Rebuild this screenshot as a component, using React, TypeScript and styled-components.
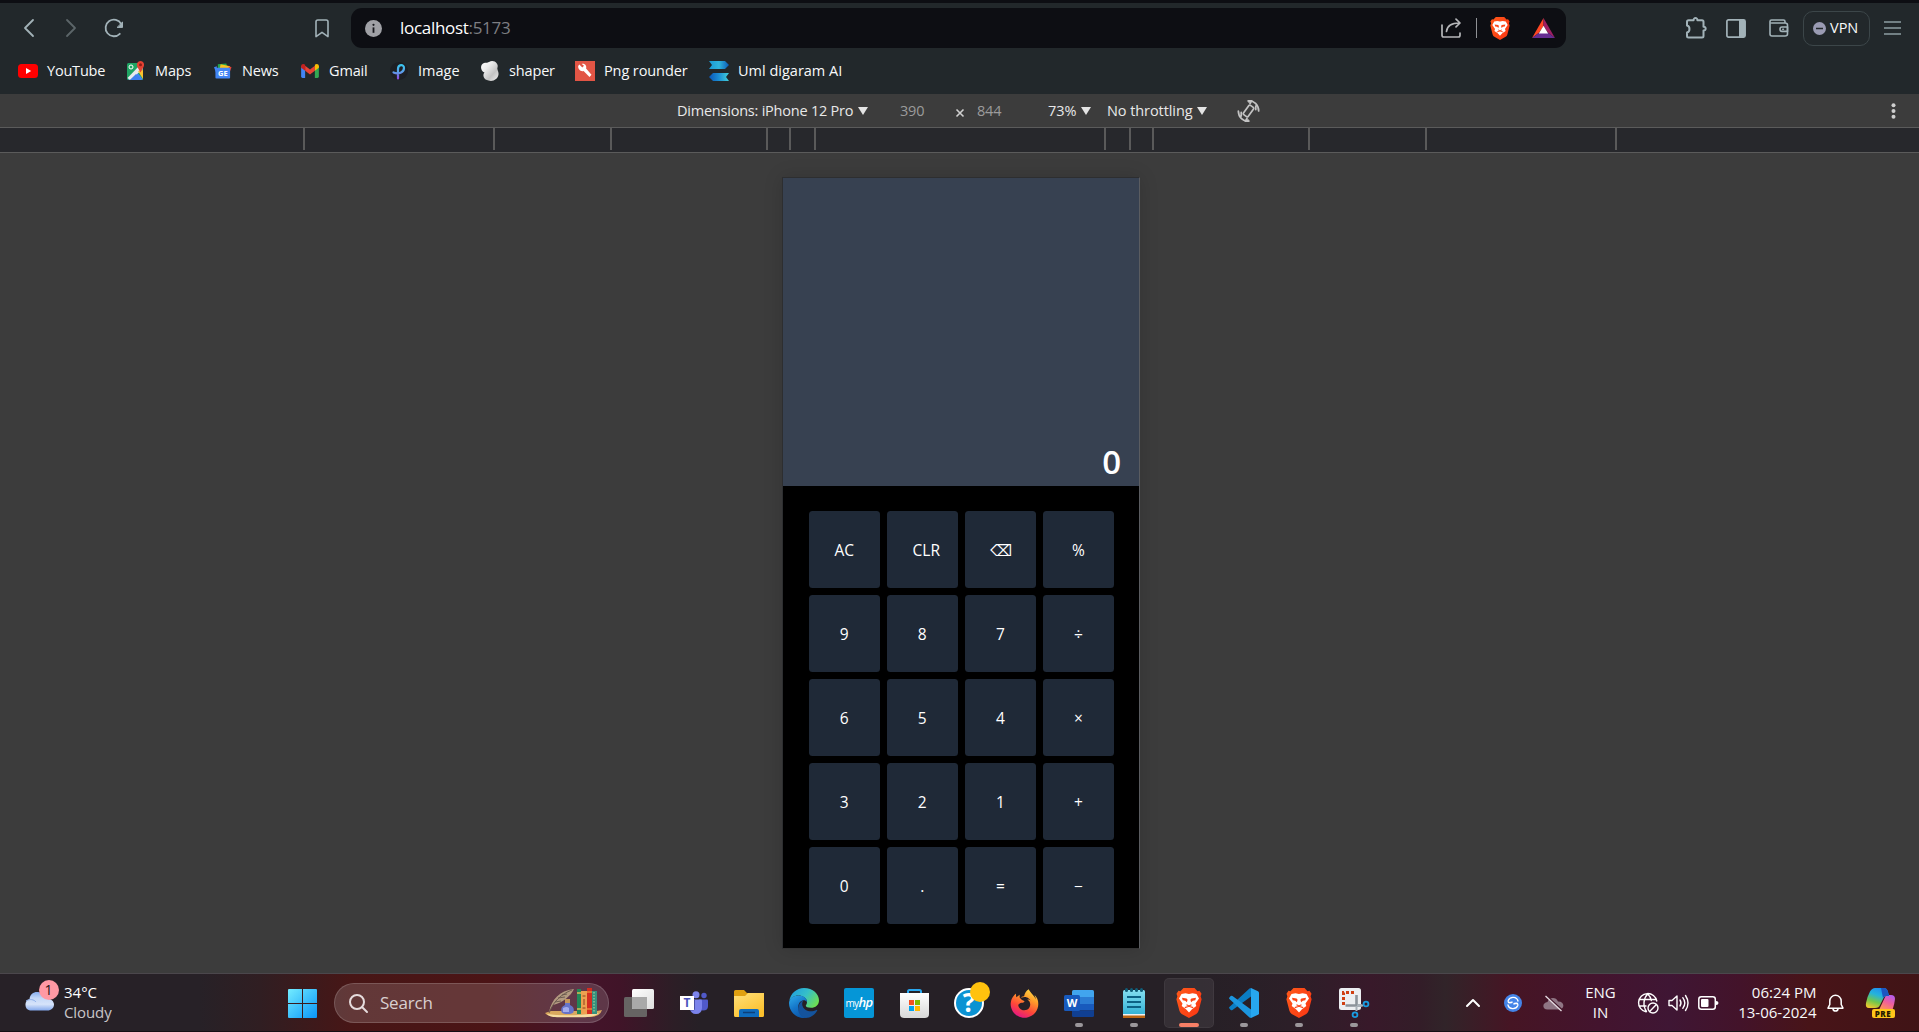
import React from 'react';
import styled, { createGlobalStyle } from 'styled-components';
import { FaFirefoxBrowser } from 'react-icons/fa6';

const GlobalStyle = createGlobalStyle`
  * { box-sizing: border-box; }
  html, body { margin: 0; padding: 0; background: #3c3c3c; overflow: hidden; }
  body { font-family: 'Open Sans', 'Noto Sans', sans-serif; }
  svg { display: block; flex: none; overflow: visible; }
`;

const Screen = styled.div`
  width: 1919px;
  height: 1032px;
  display: flex;
  flex-direction: column;
  background: #3c3c3c;
  overflow: hidden;
`;

const Text = styled.span<{ $size?: number; $ls?: number; $color?: string; $weight?: number }>`
  font-size: ${p => p.$size ?? 14.5}px;
  letter-spacing: ${p => p.$ls ?? 0}px;
  color: ${p => p.$color ?? '#f8f9fa'};
  font-weight: ${p => p.$weight ?? 400};
  line-height: 20px;
  white-space: nowrap;
`;

/* ---------- browser chrome ---------- */

const BrowserTop = styled.header`
  height: 94px;
  border-top: 3px solid #0d0e13;
  background: #22282b;
  flex: none;
`;

const NavBar = styled.div`
  height: 50px;
  display: flex;
  align-items: center;
`;

const Slot = styled.div<{ $w: number; $justify?: string }>`
  width: ${p => p.$w}px;
  flex: none;
  display: flex;
  align-items: center;
  justify-content: ${p => p.$justify ?? 'center'};
`;

const AddressBar = styled.div`
  width: 1215px;
  height: 40px;
  border-radius: 11px;
  background: #0d0e13;
  display: flex;
  align-items: center;
  padding-left: 14px;
  flex: none;
`;

const Url = styled.div`
  margin-left: 18px;
  width: 1041px;
  display: flex;
`;

const Divider = styled.div`
  width: 1px;
  height: 20px;
  margin: 0 13px 0 14px;
  background: #8f9195;
`;

const VpnButton = styled.button`
  width: 67px;
  height: 35px;
  border: 1px solid #3c4649;
  border-radius: 10px;
  background: transparent;
  display: flex;
  align-items: center;
  gap: 4px;
  padding: 0 0 0 9px;
  font-family: inherit;
`;

const Bookmarks = styled.nav`
  height: 38px;
  padding: 0 0 3px 18px;
  display: flex;
  align-items: center;
`;

const Bookmark = styled.a<{ $w: number }>`
  width: ${p => p.$w}px;
  flex: none;
  display: flex;
  align-items: center;
  gap: 9px;
`;

const IconBox = styled.span`
  width: 20px;
  height: 20px;
  display: flex;
  align-items: center;
  justify-content: center;
  flex: none;
`;

/* ---------- device toolbar ---------- */

const DeviceBar = styled.div`
  height: 33px;
  background: #3c3c3c;
  display: flex;
  align-items: center;
  padding: 0 20px 0 677px;
  flex: none;
`;

const Field = styled.div<{ $w: number; $drop?: number }>`
  width: ${p => p.$w}px;
  height: 20px;
  display: flex;
  align-items: center;
  padding-top: ${p => p.$drop ?? 0}px;
  flex: none;
`;

const Ruler = styled.div`
  height: 26px;
  flex: none;
  display: flex;
  justify-content: center;
  background: #27282c;
  border-top: 1px solid #5b5b5b;
  border-bottom: 1px solid #5b5b5b;
`;

const Tick = styled.i<{ $gap: number }>`
  width: 2px;
  height: 22px;
  margin-left: ${p => p.$gap}px;
  background: #5a5a5a;
  flex: none;
`;

const Stage = styled.main`
  height: 820px;
  flex: none;
  padding: 24px 0 0 782px;
`;

/* ---------- calculator ---------- */

const Phone = styled.section`
  width: 358px;
  height: 772px;
  border: 1px solid #2d2e30;
  border-right-color: #5a5c60;
  border-bottom-color: #343434;
  box-shadow: 0 0 18px rgba(0, 0, 0, 0.14);
  background: #000;
  display: flex;
  flex-direction: column;
`;

const Display = styled.div`
  height: 308px;
  background: #374151;
  display: flex;
  justify-content: flex-end;
  align-items: flex-end;
  padding: 0 18px 6px 0;
  flex: none;
`;

const Result = styled.output`
  color: #fff;
  font-size: 33px;
  font-weight: 600;
  line-height: 36px;
`;

const Keypad = styled.div`
  display: grid;
  grid-template-columns: repeat(4, 71px);
  grid-auto-rows: 76.7px;
  column-gap: 7.1px;
  row-gap: 7.3px;
  padding: 24.9px 0 0 25.7px;
`;

const Key = styled.button<{ $dx?: number }>`
  border: 0;
  border-radius: 3.5px;
  background: #1f2937;
  color: #fff;
  font-family: 'Open Sans', 'DejaVu Sans', sans-serif;
  font-size: 15.5px;
  line-height: 20px;
  padding: 1.4px 0 0 ${p => p.$dx ?? 0}px;
  display: flex;
  align-items: center;
  justify-content: center;
`;

/* ---------- taskbar ---------- */

const Taskbar = styled.footer`
  height: 59px;
  flex: none;
  display: flex;
  align-items: center;
  padding: 1px 0 0 24px;
  border-top: 1px solid #4b474c;
  border-bottom: 1px solid #150f14;
  background: linear-gradient(
    90deg,
    #272127 0, #272127 200px, #301e22 260px, #471616 350px, #4b1416 490px,
    #45142a 580px, #401428 620px, #2c1e26 675px, #262026 700px, #262026 1200px,
    #2c1f28 1290px, #38192a 1370px, #331d28 1420px, #312429 1445px, #461524 1510px,
    #43142e 1600px, #3f1634 1670px, #43132a 1740px, #481418 1810px, #401416 1919px
  );
`;

const Weather = styled.div`
  width: 264px;
  display: flex;
  align-items: center;
  gap: 10px;
`;

const CloudWrap = styled.div`
  position: relative;
  width: 30px;
  height: 24px;
  flex: none;
`;

const Badge = styled.span`
  position: absolute;
  left: 14.5px;
  top: -11px;
  width: 20px;
  height: 20px;
  border-radius: 50%;
  background: #ff99a4;
  color: #1d1416;
  font-size: 14px;
  line-height: 20px;
  text-align: center;
`;

const Lines = styled.div<{ $align?: string }>`
  display: flex;
  flex-direction: column;
  align-items: ${p => p.$align ?? 'flex-start'};
  padding-bottom: 2px;
  flex: none;
`;

const SearchBox = styled.div`
  width: 275px;
  height: 40px;
  margin: 0 2.5px 0 17px;
  border-radius: 20px;
  border: 1px solid rgba(255, 255, 255, 0.16);
  background: rgba(255, 255, 255, 0.15);
  display: flex;
  align-items: center;
  padding: 0 0 0 14px;
  flex: none;
`;

const SearchText = styled.div`
  width: 177px;
  padding: 0 0 0 12px;
`;

const AppTile = styled.div<{ $active?: boolean }>`
  position: relative;
  width: 50px;
  height: 50px;
  margin: 0 2.5px;
  border-radius: 5px;
  display: flex;
  align-items: center;
  justify-content: center;
  flex: none;
  background: ${p => (p.$active ? 'rgba(255,255,255,0.07)' : 'transparent')};
  box-shadow: ${p => (p.$active ? 'inset 0 0 0 1px rgba(255,255,255,0.05)' : 'none')};
`;

const Running = styled.i<{ $active?: boolean }>`
  position: absolute;
  bottom: 1px;
  left: ${p => (p.$active ? 15 : 21)}px;
  width: ${p => (p.$active ? 20 : 8)}px;
  height: 4px;
  border-radius: 2px;
  background: ${p => (p.$active ? '#f77f66' : '#9b979b')};
`;

const MyHp = styled.div`
  width: 30px;
  height: 30px;
  border-radius: 2px;
  background: #0596d7;
  color: #fff;
  font: 10px/28px 'Open Sans', sans-serif;
  text-align: center;
  letter-spacing: -0.6px;
  b { font-size: 13px; font-weight: 600; font-style: italic; }
`;

const FoxIcon = styled(FaFirefoxBrowser)`
  path { fill: url(#foxFill); }
`;

/* ---------- icons ---------- */

const line = { fill: 'none', strokeLinecap: 'round' as const, strokeLinejoin: 'round' as const };

const Chevron = ({ color, flip }: { color: string; flip?: boolean }) => (
  <svg width="10" height="18" viewBox="0 0 10 18" {...line} stroke={color} strokeWidth="1.8">
    <path d={flip ? 'M1 1l8 8-8 8' : 'M9 1L1 9l8 8'} />
  </svg>
);

const Reload = () => (
  <svg width="20" height="20" viewBox="0 0 20 20" {...line} stroke="#a2b2b8" strokeWidth="1.8">
    <path d="M15.8 15.8A8.3 8.3 0 1 1 17.2 6" />
    <path d="M18.5 4.4v5h-5z" fill="#a2b2b8" strokeWidth="1" />
  </svg>
);

const BookmarkOutline = () => (
  <svg width="14" height="19" viewBox="0 0 14 19" {...line} stroke="#a2b2b8" strokeWidth="1.6">
    <path d="M1 2.8Q1 1 2.8 1h8.4Q13 1 13 2.8V17.6L7 13.4 1 17.6z" />
  </svg>
);

const Info = () => (
  <svg width="17" height="17" viewBox="0 0 17 17">
    <circle cx="8.5" cy="8.5" r="8.5" fill="#a0a1a6" />
    <circle cx="8.5" cy="4.8" r="1.1" fill="#17181d" />
    <path d="M8.5 7.4v5.4" stroke="#17181d" strokeWidth="1.8" />
  </svg>
);

const Share = () => (
  <svg width="21" height="20" viewBox="0 0 21 20" {...line} stroke="#b6b7ba" strokeWidth="1.7">
    <path d="M1 7v10.3Q1 19 2.7 19h14.6q1.7 0 1.7-1.7V15" />
    <path d="M5.500 13.500C6 8.500 9.500 5 18.500 5M15 1.200l4 3.800-4 3.800" />
  </svg>
);

const BraveIcon = ({ w, h }: { w: number; h: number }) => (
  <svg width={w} height={h} viewBox="0 0 26 30">
    <path d="M7.500 0h11l3 3.200 2-.4 2 3-.9 2.400 1 3-3 11.500q-.6 2-2.300 3.200L13 30l-7.300-4.100q-1.700-1.200-2.300-3.200L.4 11.200l1-3L.5 5.800l2-3 2 .4z" fill="url(#braveFill)" />
    <path d="M5.500 6l4-.8L13 6l3.500-.8 4 .8 2.500 4.500-3.500 5 .8 2.600-4.300 3.200L13 24.500l-3-3.200-4.300-3.200.8-2.600L3 10.500z" fill="#fff" />
    <path d="M6 9.700l4.600.8 1 1.300-.7 2.500-1.700-1.600-2.500-.4zM20 9.700l-4.600.8-1 1.300.7 2.500 1.700-1.600 2.500-.4z" fill="#fb4518" />
    <path d="M10.500 16.800l2.500 1.200 2.500-1.200M8.800 19.600L13 18.300l4.200 1.300" fill="none" stroke="#fb4518" strokeWidth="1.100" />
  </svg>
);

const Bat = () => (
  <svg width="23" height="20" viewBox="0 0 23 20">
    <path d="M11.500 0v8L7 14.800 0 20z" fill="#ff4724" />
    <path d="M11.500 0L23 20l-7-5.200L11.500 8z" fill="#9e1f63" />
    <path d="M0 20h23l-7-5.200H7z" fill="#662d91" />
    <path d="M11.500 7.800l4.700 7.600H6.800z" fill="#fff" />
  </svg>
);

const Puzzle = () => (
  <svg width="21" height="22" viewBox="0 0 21 22" {...line} stroke="#a2b2b8" strokeWidth="2">
    <path d="M2.500 3.200H7.600C7.400.4 11.600.4 11.400 3.200H16Q17.500 3.200 17.500 4.700V9.800C20.400 9.600 20.400 13.700 17.500 13.500V19Q17.500 20.500 16 20.500H2.500Q1 20.500 1 19V15.500C4.300 14.800 4.300 9.200 1 8.500V4.700Q1 3.200 2.500 3.200z" />
  </svg>
);

const SidePanel = () => (
  <svg width="20" height="19" viewBox="0 0 20 19">
    <rect x=".9" y=".9" width="18.200" height="17.200" rx="1.500" fill="none" stroke="#a2b2b8" strokeWidth="1.700" />
    <path d="M13 1h6v17h-6z" fill="#a2b2b8" />
  </svg>
);

const Wallet = () => (
  <svg width="20" height="18" viewBox="0 0 20 18" {...line} stroke="#a2b2b8" strokeWidth="1.600">
    <path d="M16 3.500V2.500Q16 1 14.500 1H2.500Q1 1 1 2.500V15q0 2 2 2h13q2.500 0 2.500-2V6q0-2-2.500-2H2.500" />
    <path d="M18.500 8h-5.500q-2 0-2 2.200t2 2.200h5.500zM13.800 10.200h.6" />
  </svg>
);

const Rotate = () => (
  <svg width="23" height="24" viewBox="0 0 24 24" {...line} stroke="#c3c3c3" strokeWidth="1.800">
    <rect x="9" y="6" width="6" height="12" rx="1.200" transform="rotate(36 12 12)" />
    <path d="M12 1.500C17.500 1 22.600 5.500 22.600 12M19.600 6.800V10.500M12 22.500C6.500 23 1.400 18.500 1.400 12M4.400 17.200V13.500" />
    <path d="M11.500 1.300l4.300-.3-1.800 3.600zM12.500 22.700l-4.300.3 1.800-3.600z" fill="#c3c3c3" strokeWidth="1" />
  </svg>
);

const Caret = () => (
  <svg width="10" height="8" viewBox="0 0 10 8"><path d="M0 0h10L5 8z" fill="#e4e4e4" /></svg>
);

const YouTubeIcon = () => (
  <svg width="20" height="14" viewBox="0 0 20 14">
    <rect width="20" height="14" rx="3.500" fill="#f00" /><path d="M8 4l5.200 3L8 10z" fill="#fff" />
  </svg>
);

const MapsIcon = () => (
  <svg width="20" height="20" viewBox="0 0 20 20">
    <rect x="1" y="2" width="16" height="17" rx="1.500" fill="#1fa463" />
    <path d="M2 18.500L10 10l7 8.500z" fill="#4285f4" />
    <path d="M1.500 17L14 4l3 4-13 11z" fill="#e9eaec" />
    <path d="M4 19l6-6 6 6z" fill="#3f80ee" />
    <path d="M12 10l5 8V9z" fill="#fbc02d" />
    <circle cx="5" cy="6" r="2" fill="none" stroke="#fff" />
    <path d="M14.500 0C11 0 9.800 4 12 7l2.500 4.500L17 7c2.200-3 1-7-2.500-7z" fill="#e34133" />
    <circle cx="14.500" cy="3.700" r="1.500" fill="#8c1d18" />
  </svg>
);

const NewsWrap = styled.span`
  position: relative;
`;
const NewsMark = styled.span`
  position: absolute;
  left: 4px;
  top: 7px;
  font-size: 7.5px;
  font-weight: 700;
  line-height: 9px;
  color: #fff;
`;

const NewsIcon = () => (
  <NewsWrap>
    <svg width="18" height="17" viewBox="0 0 19 17">
      <path d="M4 2l9-1 2 8H4z" fill="#27a34e" />
      <path d="M7 2l10 2-1 7H5z" fill="#f8c21c" />
      <path d="M0 5l3-1v9z" fill="#4285f4" /><path d="M18.500 5l-3-1v9z" fill="#ea4335" />
      <rect x="1.500" y="5.500" width="15.500" height="11.500" rx="1" fill="#4285f4" />
    </svg>
    <NewsMark>GE</NewsMark>
  </NewsWrap>
);

const GmailIcon = () => (
  <svg width="18" height="14" viewBox="0 0 19 15">
    <path d="M0 2v11.500Q0 15 1.500 15H4.300V4z" fill="#4285f4" />
    <path d="M19 2v11.500Q19 15 17.500 15h-2.800V4z" fill="#34a853" />
    <path d="M4.300 2l5.200 4 5.200-4v5.200l-5.200 4-5.200-4z" fill="#ea4335" />
    <path d="M0 2.300C0 .2 2.400-.7 4.300.9V7.200L0 4z" fill="#c5221f" />
    <path d="M19 2.300C19 .2 16.600-.7 14.700.9V7.200L19 4z" fill="#fbbc04" />
  </svg>
);

const ImageIcon = () => (
  <svg width="18" height="18" viewBox="0 0 18 18" {...line} strokeWidth="2.200">
    <circle cx="9" cy="9" r="9" fill="#1d1f24" />
    <path d="M3.500 10.500c5 2 10.500 0 10.500-4.500C14 2 8 2 8 7v9.500" stroke="url(#pixFill)" />
  </svg>
);

const ShaperIcon = () => (
  <svg width="18" height="20" viewBox="0 0 18 20">
    <path d="M8 1c5-3 10 2 8.500 5.500-.8 2 1.500 4 1 7C17 18 12 21 7.500 19.500 3 19 1 14 3.500 11.500-1 10-1 3 3 2c2-.8 3 .2 5-1z" fill="url(#shaperFill)" />
  </svg>
);

const WrenchIcon = () => (
  <svg width="20" height="20" viewBox="0 0 20 20">
    <rect width="20" height="20" fill="#e25545" />
    <path d="M4.300 3.500l3 3 1.700-1.700-2.300-1.900c3-.8 5.300 1.700 4.400 4.600l5.400 6.300-2 2.200-5.900-6C5.700 11 2.800 8 3.200 5z" fill="#fff" />
  </svg>
);

const UmlIcon = () => (
  <svg width="20" height="20" viewBox="0 0 20 20">
    <path d="M0 0h16l4 4-4 4H0l3-4z" fill="url(#umlA)" />
    <path d="M20 12H4l-4 4 4 4h16l-3-4z" fill="url(#umlB)" />
  </svg>
);

const Cloud = () => (
  <svg width="30" height="20" viewBox="0 0 30 20">
    <path d="M6 19.500a6 6 0 0 1-.5-11.500C6 3 10 .5 14 1c4 .3 7 3 8 6.500 4.500-.2 8 2.500 8 6s-3 6-6.500 6z" fill="url(#cloudFill)" />
    <path d="M2 10c4-2.500 8-1.500 10 1" fill="none" stroke="#8fb0ea" strokeWidth="1" />
  </svg>
);

const Windows = () => (
  <svg width="29" height="29" viewBox="0 0 29 29">
    <path d="M1 0h13v14H0V1Q0 0 1 0zM15 0h13q1 0 1 1v13H15zM0 15h14v14H1q-1 0-1-1zM15 15h14v13q0 1-1 1H15z" fill="url(#winFill)" />
  </svg>
);

const Magnifier = () => (
  <svg width="19" height="19" viewBox="0 0 19 19" {...line} stroke="#e6dcdd" strokeWidth="2">
    <circle cx="8" cy="8" r="7" /><path d="M13 13l5 5" />
  </svg>
);

const SearchArt = () => (
  <svg width="57" height="30" viewBox="0 0 57 30">
    <path d="M0 25l6-2h46l5-1q-2 7-12 7H12Q3 29 0 25z" fill="#d9a85e" />
    <path d="M2 26q20 3 52-1-4 4-14 4.200H12Q4 29 2 26z" fill="#f6dca0" />
    <path d="M4 24C7 11 14 3 29 1 26 8 17 15 8 17z" fill="#b39a80" />
    <path d="M4 25C8 14 16 6 27 2M10 14l6-1M13 10l7-1M17 7l5-1" fill="none" stroke="#67564c" strokeWidth=".9" />
    <path d="M20 11h5v5h-5z" fill="#c5955a" />
    <path d="M20 15h5v2q5 2 3.500 7-1 2-6 2t-6-2Q15 19 20 17z" fill="#6673c9" />
    <path d="M18 20q4-2 6 0v4h-6z" fill="#a3abed" />
    <path d="M32 1h4v25h-4z" fill="#238657" />
    <path d="M32 5h4M32 21h4" stroke="#ddba55" strokeWidth="1.500" />
    <path d="M36 3h6v23h-6z" fill="#eda050" /><path d="M37.500 8h3M37.500 20h3M39 11v6" stroke="#8d431d" />
    <path d="M42 0h5v26h-5z" fill="#d42d20" /><path d="M42 4h5M42 21h5" stroke="#f4b13f" />
    <path d="M47 3h5v23h-5z" fill="#36907e" /><path d="M49 4v21" stroke="#badf9d" strokeDasharray="1.500 1.500" />
  </svg>
);

const TaskView = () => (
  <svg width="30" height="28" viewBox="0 0 30 28">
    <rect y="8" width="23" height="20" rx="1.500" fill="#666463" />
    <rect x="8" width="22" height="20" rx="1.500" fill="url(#tvFill)" />
    <path d="M8 8h15v12H9.500Q8 20 8 18.500z" fill="#a9a9a9" />
  </svg>
);

const TeamsT = styled.span`
  position: absolute;
  left: 11px;
  top: 18px;
  width: 14px;
  height: 14px;
  background: #fff;
  color: #4b53bc;
  font: 700 12px/14px 'Open Sans', sans-serif;
  text-align: center;
`;

const Teams = () => (
  <>
    <svg width="27" height="24" viewBox="0 0 27 24">
      <circle cx="15" cy="3.700" r="3.500" fill="#7b83eb" /><circle cx="23" cy="4.500" r="2.700" fill="#5059c9" />
      <path d="M18 8.500h8q1 0 1 1V15q0 4.500-5 4.500-4 0-4-4z" fill="#5059c9" />
      <path d="M10 8.500h10q1 0 1 1V17q-.5 6-6 6t-6-6z" fill="#7b83eb" />
      <path d="M14 8.500v9q0 2-2 2H9V17l1-8.500z" fill="#4a4fa5" />
    </svg>
    <TeamsT>T</TeamsT>
  </>
);

const Folder = () => (
  <svg width="30" height="27" viewBox="0 0 30 27">
    <path d="M0 10V1.500Q0 0 1.500 0h8.500l3 3h15.500Q30 3 30 4.500V10z" fill="#e0a010" />
    <path d="M0 6h11l3-3h16v22.500Q30 27 28.500 27h-27Q0 27 0 25.500z" fill="url(#folderFill)" />
    <path d="M5 27v-6q0-2 2-2h16q2 0 2 2v6z" fill="#0f6cbd" /><path d="M9 22.500h12" stroke="#0c3f78" strokeWidth="1.500" />
  </svg>
);

const EdgeIcon = () => (
  <svg width="30" height="30" viewBox="0 0 30 30">
    <path d="M.3 13C1.500 5.500 7.500 0 15 0c9 0 15 6.200 15 12.200 0 4.800-3.500 7.600-8 7.600-3.300 0-5.200-1-5.200-2 0-.8 1.200-1.300 1.200-3.800C18 10 13.500 7.500 9.500 7.500 5 7.500 1.500 10 .3 13z" fill="url(#edgeTop)" />
    <path d="M0 15C0 10.500 4.500 7.500 9.500 7.500c5.500 0 8.500 3.300 8.500 6.500-1-1.700-2.600-2-3.600-1.800-3 .3-5.700 3.800-5 8.300C10 25 13 28.700 17 29.900 8 31 0 24.500 0 15z" fill="url(#edgeLeft)" />
    <path d="M28.300 22.300C26 27 21.500 30 16.800 30 12 29 8.800 25 9.200 20.200c.3-3.900 2.300-6.900 5.200-8-1.700 2.300-1.800 5.800.9 8.500 3.200 3.200 8.200 3.300 12.200 1.200.6-.3 1 0 .8.400z" fill="#14539c" />
  </svg>
);

const Store = () => (
  <svg width="29" height="29" viewBox="0 0 29 29">
    <path d="M8 6V2.500Q8 1 9.500 1h10Q21 1 21 2.500V6" fill="none" stroke="#2aa7ee" strokeWidth="2" />
    <path d="M0 4h29v21q0 4-4 4H4q-4 0-4-4z" fill="url(#storeFill)" />
    <path d="M9 11h5v5H9z" fill="#f25022" /><path d="M15 11h5v5h-5z" fill="#7fba00" />
    <path d="M9 17h5v5H9z" fill="#00a4ef" /><path d="M15 17h5v5h-5z" fill="#ffb900" />
  </svg>
);

const HelpMark = styled.span`
  position: relative;
  width: 30px;
  height: 30px;
  border: 2px solid #fff;
  border-radius: 50%;
  background: #0b93d3;
  color: #fff;
  font: 700 26px/25px 'Open Sans', sans-serif;
  text-align: center;
  &::after {
    content: '';
    position: absolute;
    right: -8px;
    top: -8px;
    width: 20px;
    height: 20px;
    border-radius: 50%;
    background: #ffc20e;
  }
`;

const WordW = styled.span`
  position: absolute;
  left: 10px;
  top: 17px;
  width: 16px;
  height: 16px;
  border-radius: 1.500px;
  background: #185abd;
  color: #fff;
  font: 700 11px/15px 'Open Sans', sans-serif;
  text-align: center;
`;

const Word = () => (
  <>
    <svg width="29" height="27" viewBox="0 0 29 27">
      <path d="M7 7V1.500Q7 0 8.500 0h19Q29 0 29 1.500V7z" fill="#41a5ee" />
      <path d="M7 7h22v7H7z" fill="#2b7cd3" /><path d="M7 14h22v6.500H7z" fill="#185abd" />
      <path d="M7 20.500h22v5Q29 27 27.500 27h-19Q7 27 7 25.500z" fill="#103f91" />
    </svg>
    <WordW>W</WordW>
  </>
);

const Notepad = () => (
  <svg width="22" height="30" viewBox="0 0 22 30">
    <path d="M0 26h22v4H0z" fill="#bb6513" /><path d="M0 25h22v2.500H0z" fill="#f1f1f1" />
    <path d="M0 3.500Q0 2 1.500 2h19Q22 2 22 3.500V26H0z" fill="url(#noteFill)" />
    <path d="M4 9h14M4 14h14M4 19h14" stroke="#0c6285" strokeWidth="1.800" />
    {[3.5, 8.5, 13.5, 18.5].map(x => <path key={x} d={`M${x} 1.500v1`} stroke="#0f5d78" strokeWidth="3" strokeLinecap="round" />)}
  </svg>
);

const VsCode = () => (
  <svg width="30" height="30" viewBox="0 0 30 30">
    <path d="M22 0l7 3.200q1 .5 1 1.500v20.600q0 1-1 1.500L22 30z" fill="#27a7f0" />
    <path d="M22 0v8.500L3.500 22q-1 .7-1.800 0L.4 20.600q-.8-.8 0-1.700L20.500.5z" fill="#0b7dc4" />
    <path d="M22 30v-8.500L3.500 8q-1-.7-1.800 0L.4 9.400q-.8.800 0 1.700l20.100 18.400z" fill="#1c96df" />
  </svg>
);

const Snip = () => (
  <svg width="30" height="30" viewBox="0 0 30 30" fill="none">
    <rect width="22" height="22" rx="2.500" fill="#eceef1" />
    <path d="M4.500 17V4.500H17" stroke="#d03f12" strokeWidth="3" strokeDasharray="3 2" />
    <path d="M17.500 7v11.500M6.500 17.500H23" stroke="#8c939a" strokeWidth="2.600" />
    <path d="M17.500 18v5M18 17.500h6" stroke="#a9b2b9" strokeWidth="2" />
    <circle cx="16" cy="26.700" r="2.400" stroke="#199be2" strokeWidth="1.800" /><circle cx="27" cy="16" r="2.400" stroke="#199be2" strokeWidth="1.800" />
  </svg>
);

const Up = () => (
  <svg width="14" height="8" viewBox="0 0 14 8" {...line} stroke="#fff" strokeWidth="2"><path d="M1 7l6-6 6 6" /></svg>
);

const Sync = () => (
  <svg width="18" height="18" viewBox="0 0 18 18" {...line} stroke="#fff" strokeWidth="1.300">
    <circle cx="9" cy="9" r="9" fill="#4484e8" stroke="none" />
    <path d="M14 7C13 2.500 6 2 4.200 6.500 3.600 9.500 7 9 8 8M4 11c1 4.500 8 5 9.800.5.600-3-2.800-2.500-3.800-1.500M4.500 8.500H8M10 9.500h3.500" />
  </svg>
);

const CloudOff = () => (
  <svg width="21" height="17" viewBox="0 0 21 17">
    <path d="M4.500 14.500C-1 14.500-1 7.500 4.500 7 5.500 2.500 13 1 15 6.500c7-.2 7 8 1 8z" fill="#8f7584" />
    <path d="M3.500 .8l15.500 14" stroke="#43152a" strokeWidth="1.600" />
    <path d="M2.500 1l16 15" stroke="#e6dce2" strokeWidth="1.300" />
  </svg>
);

const Globe = () => (
  <svg width="21" height="21" viewBox="0 0 21 21" {...line} stroke="#fff" strokeWidth="1.400">
    <path d="M8 18.800A9.200 9.200 0 1 1 18.800 8M1.500 6.500h16.300M1 13h7M8.500 18.500C4.500 13 5.500 5 9.700.9c2 1.800 3.300 4.200 3.600 6.600" />
    <circle cx="15" cy="15" r="5" /><path d="M11.600 18.400l6.800-6.800" />
  </svg>
);

const Speaker = () => (
  <svg width="21" height="18" viewBox="0 0 21 18" {...line} stroke="#fff" strokeWidth="1.400">
    <path d="M1 6.500h3L9 2v14l-5-4.500H1zM12 6q2 3 0 6M14.800 3.700q4 5.300 0 10.600M17.500 1.500q5 7.500 0 15" />
  </svg>
);

const Battery = () => (
  <svg width="21" height="14" viewBox="0 0 21 14" fill="none">
    <rect x=".8" y=".8" width="16.500" height="12.400" rx="2.500" stroke="#fff" strokeWidth="1.500" />
    <rect x="3" y="3" width="7.500" height="8" rx="1" fill="#fff" /><path d="M18 5q2.500 0 2.500 2T18 9z" fill="#fff" />
  </svg>
);

const Bell = () => (
  <svg width="17" height="18" viewBox="0 0 17 18" {...line} stroke="#fff" strokeWidth="1.500">
    <path d="M2.800 10.500V7a5.700 5.700 0 0 1 11.400 0v3.500l1.800 3.700H1zM6 15c.5 2.800 4.500 2.800 5 0" />
  </svg>
);

const CopilotWrap = styled.div`
  position: relative;
  width: 30px;
  height: 30px;
`;
const Pre = styled.span`
  position: absolute;
  left: 6px;
  bottom: 0;
  width: 23px;
  height: 9px;
  border-radius: 2px;
  background: #ffc61a;
  color: #241a00;
  font-size: 8px;
  font-weight: 800;
  line-height: 9px;
  letter-spacing: 0.6px;
  text-align: center;
`;
const Copilot = () => (
  <CopilotWrap>
    <svg width="29" height="26" viewBox="0 0 29 26">
      <path d="M20 7h5q4 0 4 4-.5 5-2.500 11H13z" fill="url(#copB)" />
      <path d="M9 0h9q3 0 4 4l1 4h-3q-2 0-3 3l-3 6q-1 3-5 3H3q-4 0-3-5 1-6 4-11.500Q6 0 9 0z" fill="url(#copA)" />
      <path d="M15 0h3q3 0 4 4l1 4h-3q-2 0-3 2z" fill="#1d56c0" />
    </svg>
    <Pre>PRE</Pre>
  </CopilotWrap>
);

const Gradients = () => {
  const g = (id: string, stops: string[], v: [number, number, number, number] = [0, 0, 1, 1]) => (
    <linearGradient key={id} id={id} x1={v[0]} y1={v[1]} x2={v[2]} y2={v[3]}>
      {stops.map((c, i) => <stop key={i} offset={i / (stops.length - 1)} stopColor={c} />)}
    </linearGradient>
  );
  return (
    <svg width="0" height="0">
      <defs>
        {g('pixFill', ['#3ac6ef', '#5aa0ea', '#8b4ce0'], [0.5, 0, 0.5, 1])}
        {g('shaperFill', ['#ffffff', '#ececec', '#c4c4c4', '#f0f0f0'])}
        {g('umlA', ['#1899d6', '#2fb4dc', '#0b5ab6'], [0, 0, 1, 0])}
        {g('umlB', ['#0b57b8', '#1c8fd4', '#43d0d8'], [0, 0, 1, 0])}
        {g('cloudFill', ['#86aef0', '#c4d8f8', '#d6e3fa', '#84a9ec'], [0, 0, 0, 1])}
        {g('winFill', ['#74ecff', '#3dc0fb', '#0a94f8'])}
        {g('tvFill', ['#ffffff', '#dedede'])}
        {g('folderFill', ['#ffe07a', '#fbc02d'], [0, 0, 0.6, 1])}
        {g('storeFill', ['#ffffff', '#d8d8d8'], [0, 0, 0, 1])}
        {g('noteFill', ['#84def0', '#35b3d6'], [0, 0, 0, 1])}
        {g('edgeTop', ['#1f9ee0', '#36c0c8', '#6fe04f'], [0, 0.2, 1, 0.7])}
        {g('edgeLeft', ['#2aa5e6', '#1474c8', '#0c55a6'], [0.2, 0, 0.7, 1])}
        {g('foxFill', ['#ffe047', '#ff9a2a', '#ff4838', '#e31587'], [0.8, 0, 0.3, 1])}
        {g('braveFill', ['#ff5a1a', '#fa3a14'], [0, 0, 1, 0.6])}
        {g('copA', ['#1f8ff0', '#24b3dc', '#72c74c', '#f3c92d'], [0.6, 0, 0.2, 1])}
        {g('copB', ['#b25cf0', '#f0609b', '#ff9556'], [0.8, 0, 0.3, 1])}
      </defs>
    </svg>
  );
};

/* ---------- data ---------- */

const bookmarks: { label: string; w: number; icon: React.ReactNode; ls?: number }[] = [
  { label: 'YouTube', w: 108, icon: <YouTubeIcon />, ls: -0.2 },
  { label: 'Maps', w: 87, icon: <MapsIcon />, ls: -0.15 },
  { label: 'News', w: 87, icon: <NewsIcon />, ls: -0.15 },
  { label: 'Gmail', w: 89, icon: <GmailIcon />, ls: -0.15 },
  { label: 'Image', w: 91, icon: <ImageIcon />, ls: 0 },
  { label: 'shaper', w: 95, icon: <ShaperIcon />, ls: -0.15 },
  { label: 'Png rounder', w: 134, icon: <WrenchIcon />, ls: -0.1 },
  { label: 'Uml digaram AI', w: 160, icon: <UmlIcon />, ls: 0 },
];

const tickGaps = [0, 188, 115, 154, 21, 23, 288, 23, 21, 154, 115, 188];

const keys = ['AC', 'CLR', '⌫', '%', '9', '8', '7', '÷', '6', '5', '4', '×', '3', '2', '1', '+', '0', '.', '=', '−'];

const keyShift: Record<string, number> = { CLR: 8, '⌫': 1 };

const apps: { icon: React.ReactNode; running?: boolean; active?: boolean }[] = [
  { icon: <TaskView /> },
  { icon: <Teams /> },
  { icon: <Folder /> },
  { icon: <EdgeIcon /> },
  { icon: <MyHp>my<b>hp</b></MyHp> },
  { icon: <Store /> },
  { icon: <HelpMark>?</HelpMark> },
  { icon: <FoxIcon size={29} /> },
  { icon: <Word />, running: true },
  { icon: <Notepad />, running: true },
  { icon: <BraveIcon w={26} h={30} />, running: true, active: true },
  { icon: <VsCode />, running: true },
  { icon: <BraveIcon w={26} h={30} />, running: true },
  { icon: <Snip />, running: true },
];

export default function App() {
  return (
    <Screen>
      <GlobalStyle />
      <BrowserTop>
        <NavBar>
          <Slot $w={58}><Chevron color="#a2b2b8" /></Slot>
          <Slot $w={25}><Chevron color="#5c6569" flip /></Slot>
          <Slot $w={61}><Reload /></Slot>
          <Slot $w={207} $justify="flex-end"><BookmarkOutline /><Slot $w={22} /></Slot>
          <AddressBar>
            <Info />
            <Url>
              <Text $size={17} $ls={-0.3} $color="#fff">localhost</Text>
              <Text $size={17} $ls={-0.3} $color="#7d7e82">:5173</Text>
            </Url>
            <Share />
            <Divider />
            <BraveIcon w={20} h={23} />
            <Slot $w={45} $justify="flex-end"><Bat /></Slot>
          </AddressBar>
          <Slot $w={141} $justify="flex-end"><Puzzle /></Slot>
          <Slot $w={39} $justify="flex-end"><SidePanel /></Slot>
          <Slot $w={43} $justify="flex-end"><Wallet /></Slot>
          <Slot $w={14} />
          <VpnButton>
            <svg width="13" height="13" viewBox="0 0 13 13"><circle cx="6.500" cy="6.500" r="6.500" fill="#9a9bb3" /><path d="M3 6.500h7" stroke="#22282b" strokeWidth="1.500" /></svg>
            <Text>VPN</Text>
          </VpnButton>
          <Slot $w={31} $justify="flex-end">
            <svg width="17" height="14" viewBox="0 0 17 14" stroke="#8d9da3" strokeWidth="1.700"><path d="M0 1h17M0 7h17M0 13h17" /></svg>
          </Slot>
        </NavBar>
        <Bookmarks>
          {bookmarks.map(b => (
            <Bookmark key={b.label} $w={b.w}>
              <IconBox>{b.icon}</IconBox>
              <Text $ls={b.ls}>{b.label}</Text>
            </Bookmark>
          ))}
        </Bookmarks>
      </BrowserTop>

      <DeviceBar>
        <Field $w={181}><Text $ls={-0.22} $color="#e8e8e8">Dimensions: iPhone 12 Pro</Text></Field>
        <Field $w={42}><Caret /></Field>
        <Field $w={56}><Text $ls={-0.2} $color="#9b9b9b">390</Text></Field>
        <Field $w={21} $drop={4}><svg width="8" height="8" viewBox="0 0 8 8" stroke="#d0d0d0" strokeWidth="1.600"><path d="M.5.500l7 7M7.500.500l-7 7" /></svg></Field>
        <Field $w={71}><Text $ls={-0.2} $color="#9b9b9b">844</Text></Field>
        <Field $w={33}><Text $color="#e8e8e8">73%</Text></Field>
        <Field $w={26}><Caret /></Field>
        <Field $w={90}><Text $ls={-0.08} $color="#e8e8e8">No throttling</Text></Field>
        <Field $w={40}><Caret /></Field>
        <Field $w={654}><Rotate /></Field>
        <svg width="5" height="16" viewBox="0 0 5 16" fill="#cfcfcf"><circle cx="2.500" cy="2.300" r="2" /><circle cx="2.500" cy="8" r="2" /><circle cx="2.500" cy="13.700" r="2" /></svg>
      </DeviceBar>

      <Ruler>{tickGaps.map((g, i) => <Tick key={i} $gap={g} />)}</Ruler>

      <Stage>
        <Phone>
          <Display><Result>0</Result></Display>
          <Keypad>{keys.map(k => <Key key={k} $dx={keyShift[k]}>{k}</Key>)}</Keypad>
        </Phone>
      </Stage>

      <Taskbar>
        <Weather>
          <CloudWrap><Cloud /><Badge>1</Badge></CloudWrap>
          <Lines>
            <Text $size={15} $color="#fff">34°C</Text>
            <Text $size={15} $ls={-0.1} $color="#c9c5c8">Cloudy</Text>
          </Lines>
        </Weather>
        <Windows />
        <SearchBox>
          <Magnifier />
          <SearchText><Text $size={17} $ls={-0.2} $color="#d9cfd0">Search</Text></SearchText>
          <SearchArt />
        </SearchBox>
        {apps.map((a, i) => (
          <AppTile key={i} $active={a.active}>
            {a.icon}
            {a.running && <Running $active={a.active} />}
          </AppTile>
        ))}
        <Slot $w={98} $justify="flex-end"><Up /></Slot>
        <Slot $w={42} $justify="flex-end"><Sync /></Slot>
        <Slot $w={42} $justify="flex-end"><CloudOff /></Slot>
        <Slot $w={74}><Lines $align="center"><Text $size={15}>ENG</Text><Text $size={15}>IN</Text></Lines></Slot>
        <Slot $w={21}><Globe /></Slot>
        <Slot $w={30} $justify="flex-end"><Speaker /></Slot>
        <Slot $w={30} $justify="flex-end"><Battery /></Slot>
        <Slot $w={98} $justify="flex-end">
          <Lines $align="flex-end"><Text $size={15}>06:24 PM</Text><Text $size={15}>13-06-2024</Text></Lines>
        </Slot>
        <Slot $w={27} $justify="flex-end"><Bell /></Slot>
        <Slot $w={52} $justify="flex-end"><Copilot /></Slot>
      </Taskbar>
      <Gradients />
    </Screen>
  );
}
